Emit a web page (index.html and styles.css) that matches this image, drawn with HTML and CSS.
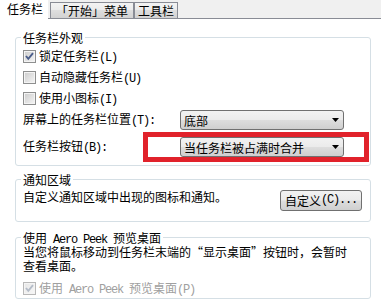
FILE: index.html
```html
<!DOCTYPE html>
<html lang="zh-CN">
<head>
<meta charset="utf-8">
<title>任务栏属性</title>
<link rel="stylesheet" href="styles.css">
</head>
<body>
<div class="page">
  <div class="tabs">
    <div class="tab-sel">任务栏</div>
    <div class="tab first">「开始」菜单</div>
    <div class="tab">工具栏</div>
  </div>

  <fieldset class="group g1">
    <legend>任务栏外观</legend>
    <div class="check">
      <span class="cb"><svg width="11" height="11" viewBox="0 0 11 11"><polyline points="2,5 4.3,7.8 9,2.2" fill="none" stroke="#4a5d8a" stroke-width="1.9"/></svg></span>
      <span>锁定任务栏<span class="lat">(L)</span></span>
    </div>
    <div class="check">
      <span class="cb"></span>
      <span>自动隐藏任务栏<span class="lat">(U)</span></span>
    </div>
    <div class="check last">
      <span class="cb"></span>
      <span>使用小图标<span class="lat">(I)</span></span>
    </div>
    <div class="crow">
      <span>屏幕上的任务栏位置<span class="lat">(T):</span></span>
      <div class="combo"><span>底部</span><svg class="arrow" width="7" height="4" viewBox="0 0 7 4"><polygon points="0,0 7,0 3.5,4" fill="#000"/></svg></div>
    </div>
    <div class="crow second">
      <span>任务栏按钮<span class="lat">(B):</span></span>
      <div class="combo"><span>当任务栏被占满时合并</span><svg class="arrow" width="7" height="4" viewBox="0 0 7 4"><polygon points="0,0 7,0 3.5,4" fill="#000"/></svg></div>
    </div>
  </fieldset>

  <fieldset class="group g2">
    <legend>通知区域</legend>
    <div class="nrow">
      <span>自定义通知区域中出现的图标和通知。</span>
      <div class="btn">自定义<span class="lat">(C)...</span></div>
    </div>
  </fieldset>

  <fieldset class="group g3">
    <legend>使用<span class="lat"> Aero Peek </span>预览桌面</legend>
    <p class="desc">当您将鼠标移动到任务栏末端的<span class="q">“</span>显示桌面<span class="q">”</span>按钮时，会暂时<br>查看桌面。</p>
    <div class="check disabled">
      <span class="cb"><svg width="11" height="11" viewBox="0 0 11 11"><polyline points="2,5 4.3,7.8 9,2.2" fill="none" stroke="#b4bcc8" stroke-width="1.9"/></svg></span>
      <span>使用<span class="lat"> Aero Peek </span>预览桌面<span class="lat">(P)</span></span>
    </div>
  </fieldset>

  <div class="mark"></div>
</div>
</body>
</html>
```

FILE: styles.css
```css
* { box-sizing: border-box; }
html, body { margin: 0; padding: 0; }
body {
  width: 381px;
  height: 301px;
  overflow: hidden;
  background: #fff;
  font-family: "Noto Sans CJK SC", sans-serif;
  font-size: 12px;
  line-height: 13px;
  color: #000;
}
.page { position: relative; height: 301px; }

.lat {
  font-family: "Liberation Mono", monospace;
  font-size: 12px;
  letter-spacing: -1.2px;
  white-space: pre;
}
.q { font-feature-settings: "fwid" 1; }

/* tabs */
.tabs {
  display: flex;
  align-items: flex-start;
  height: 19px;
  background: #f0f0f0;
  border-bottom: 1px solid #898c95;
}
.tab-sel {
  width: 48px;
  height: 19px;
  background: #fff;
  padding-left: 7px;
  line-height: 18px;
  flex: none;
}
.tab {
  flex: none;
  margin-top: 2px;
  height: 16px;
  padding: 0 3px;
  border: 1px solid #898c95;
  border-bottom: none;
  background: linear-gradient(#f3f3f3, #ebebeb 50%, #dedede 50%, #d2d2d2);
  line-height: 15px;
}
.tab.first { margin-left: 2px; padding: 0 5px; }

/* group boxes */
.group {
  margin: 0 0 0 15px;
  width: 356px;
  min-width: 0;
  padding: 0 8px 0 7px;
  border: 1px solid #d5dfe5;
  border-radius: 3px;
}
.group legend {
  padding: 0 2px;
  margin-left: -2px;
  height: 15px;
  line-height: 15px;
}
.g1 { margin-top: 11px; padding-top: 5px; padding-bottom: 8px; }
.g2 { margin-top: 6px; padding-top: 3px; padding-bottom: 10px; }
.g3 { margin-top: 8px; padding-top: 0; padding-bottom: 3px; }

/* checkboxes */
.check {
  display: flex;
  align-items: center;
  gap: 3px;
  height: 13px;
  margin-bottom: 8px;
}
.check.last { margin-bottom: 5px; }
.cb {
  flex: none;
  width: 13px;
  height: 13px;
  border: 1px solid #8e8f8f;
  background: linear-gradient(135deg, #cbcbcb, #f6f6f6);
  box-shadow: inset 0 0 0 1px #f4f4f4;
  display: flex;
}
.g3 .check { margin: 9px 0 0 0; }
.check.disabled { color: #a0a0a0; }
.check.disabled .cb {
  border-color: #b8b8b8;
  background: linear-gradient(135deg, #e6e6e6, #f8f8f8);
}

/* combo rows */
.crow {
  display: grid;
  grid-template-columns: 157px 164px;
  align-items: center;
  height: 20px;
}
.crow.second { margin-top: 7px; }
.combo {
  height: 20px;
  border: 1px solid #707070;
  border-radius: 3px;
  background: linear-gradient(#f2f2f2, #ebebeb 48%, #dddddd 52%, #cfcfcf);
  display: flex;
  align-items: center;
  justify-content: space-between;
  padding: 0 4px 0 3px;
}
.arrow { flex: none; display: block; }

/* notification row */
.nrow {
  display: flex;
  justify-content: space-between;
  align-items: flex-start;
}
.btn {
  width: 82px;
  height: 21px;
  border: 1px solid #707070;
  border-radius: 3px;
  background: linear-gradient(#f2f2f2, #ebebeb 48%, #dddddd 52%, #cfcfcf);
  display: flex;
  align-items: center;
  justify-content: center;
}

.desc { margin: 0; line-height: 14px; }

/* red annotation */
.mark {
  position: absolute;
  left: 143px;
  top: 132px;
  width: 226px;
  height: 30px;
  border: 5px solid #e1222b;
}
```
